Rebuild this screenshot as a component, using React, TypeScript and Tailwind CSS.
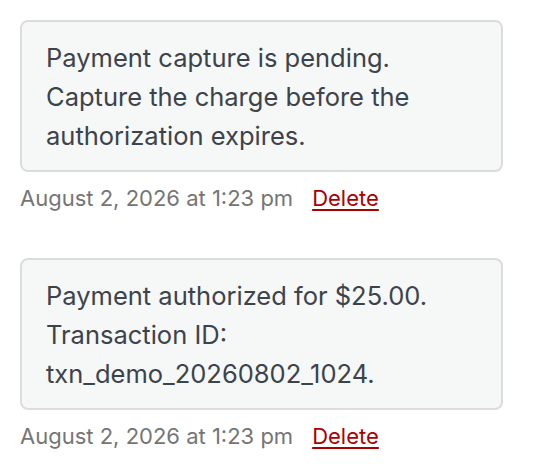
const notes = [
  {
    lines: ['Payment capture is pending.', 'Capture the charge before the', 'authorization expires.'],
    date: 'August 2, 2026 at 1:23 pm',
  },
  {
    lines: ['Payment authorized for $25.00.', 'Transaction ID:', 'txn_demo_20260802_1024.'],
    date: 'August 2, 2026 at 1:23 pm',
  },
]

export default function App() {
  return (
    <div className="min-h-screen bg-white px-5 pt-5 font-['Inter','Liberation_Sans',sans-serif]">
      <ul className="w-[483px] flex flex-col gap-[45px]">
        {notes.map((n, i) => (
          <li key={i}>
            <div className="rounded-[8px] border-2 border-[#dcdcde] bg-[#f6f7f7] px-6 pt-4 pb-[15px] text-[25.5px] leading-[39px] text-[#3c434a]">
              {n.lines.map((l) => (
                <p key={l}>{l}</p>
              ))}
            </div>
            <p className="mt-[11px] text-[22px] leading-[30px] text-[#757575]">
              {n.date}
              <a href="#" className="ml-[19px] text-[#aa0000] underline decoration-2 underline-offset-[3px]">Delete</a>
            </p>
          </li>
        ))}
      </ul>
    </div>
  )
}
